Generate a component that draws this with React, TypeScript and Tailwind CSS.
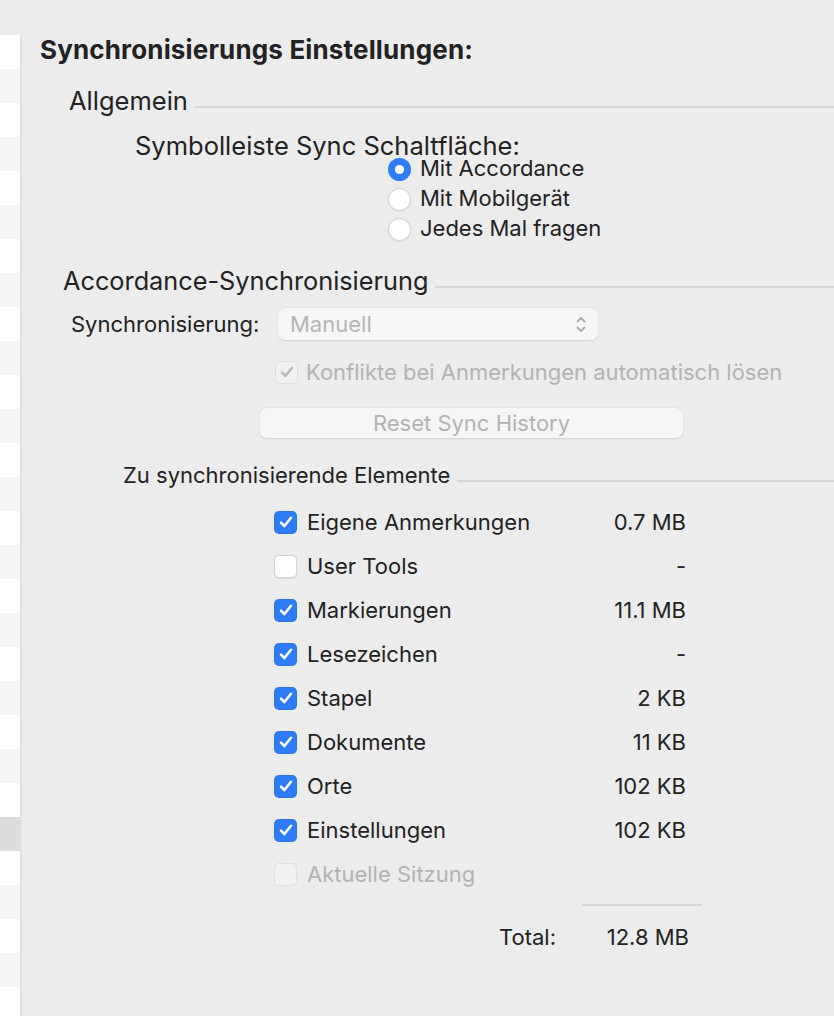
import React from "react";

const FONT = { fontFamily: 'Inter, "Noto Sans", "Liberation Sans", sans-serif' };

function Check({ checked, disabled }: { checked: boolean; disabled?: boolean }) {
  if (disabled) {
    return (
      <div className="w-[23px] h-[23px] rounded-[5px] bg-[#f1f1f1] border border-[#dedede] flex items-center justify-center shrink-0">
        {checked && (
          <svg width="16" height="16" viewBox="0 0 16 16">
            <path d="M3 8.6 L6.4 12 L13 3.8" fill="none" stroke="#b7b7b7" strokeWidth="2.4" strokeLinecap="round" strokeLinejoin="round" />
          </svg>
        )}
      </div>
    );
  }
  if (checked) {
    return (
      <div className="w-[23px] h-[23px] rounded-[5px] bg-[#2f7df6] flex items-center justify-center shrink-0 shadow-[inset_0_0_0_1px_rgba(0,0,0,0.06)]">
        <svg width="16" height="16" viewBox="0 0 16 16">
          <path d="M3 8.6 L6.4 12 L13 3.8" fill="none" stroke="#ffffff" strokeWidth="2.6" strokeLinecap="round" strokeLinejoin="round" />
        </svg>
      </div>
    );
  }
  return (
    <div className="w-[23px] h-[23px] rounded-[5px] bg-white border border-[#d2d2d2] shrink-0 shadow-[0_0.5px_1px_rgba(0,0,0,0.08)]" />
  );
}

function Radio({ selected }: { selected: boolean }) {
  if (selected) {
    return (
      <div className="w-[23px] h-[23px] rounded-full bg-[#2f7df6] flex items-center justify-center shrink-0">
        <div className="w-[9px] h-[9px] rounded-full bg-white" />
      </div>
    );
  }
  return <div className="w-[23px] h-[23px] rounded-full bg-white border border-[#d0d0d0] shrink-0 shadow-[0_0.5px_1px_rgba(0,0,0,0.08)]" />;
}

function SectionHeader({ label, pl, size }: { label: string; pl: string; size: string }) {
  return (
    <div className={`flex items-center h-[30px] ${pl}`}>
      <span className={`${size} text-[#222] whitespace-nowrap leading-none`}>{label}</span>
      <div className="flex-1 h-[2px] bg-[#d6d6d6] ml-[7px] mt-[12px]" />
    </div>
  );
}

const items: { label: string; value: string; checked: boolean; disabled?: boolean }[] = [
  { label: "Eigene Anmerkungen", value: "0.7 MB", checked: true },
  { label: "User Tools", value: "-", checked: false },
  { label: "Markierungen", value: "11.1 MB", checked: true },
  { label: "Lesezeichen", value: "-", checked: true },
  { label: "Stapel", value: "2 KB", checked: true },
  { label: "Dokumente", value: "11 KB", checked: true },
  { label: "Orte", value: "102 KB", checked: true },
  { label: "Einstellungen", value: "102 KB", checked: true },
  { label: "Aktuelle Sitzung", value: "", checked: false, disabled: true },
];

export default function App() {
  const rows = Array.from({ length: 29 }, (_, i) => i);
  return (
    <div className="flex w-[834px] h-[1016px] bg-[#ececec] overflow-hidden" style={FONT}>
      <div className="w-[22px] shrink-0 flex flex-col pt-[35px]">
        <div className="flex flex-col border-r-[2px] border-[#e2e2e2] flex-1">
          {rows.map((i) => (
            <div
              key={i}
              className={`h-[34px] shrink-0 ${i === 23 ? "bg-[#dcdcdc]" : i % 2 === 1 ? "bg-[#f4f5f5]" : "bg-white"}`}
            />
          ))}
        </div>
      </div>
      <div className="flex-1 flex flex-col pt-[35px] text-[#222]">
        <div className="h-[30px] flex items-center pl-[18px]">
          <span className="text-[26px] font-bold leading-none text-[#222] whitespace-nowrap tracking-[0.15px]">Synchronisierungs Einstellungen:</span>
        </div>
        <div className="mt-[21px]">
          <SectionHeader label="Allgemein" pl="pl-[47px]" size="text-[25.5px]" />
        </div>
        <div className="mt-[15px] h-[30px] flex items-center pl-[113px]">
          <span className="text-[25.5px] leading-[0.88] whitespace-nowrap">Symbolleiste Sync Schaltfläche:</span>
        </div>
        <div className="flex flex-col pl-[366px] -mt-[7px]">
          {["Mit Accordance", "Mit Mobilgerät", "Jedes Mal fragen"].map((l, i) => (
            <div key={l} className="h-[30px] flex items-center gap-[9px]">
              <Radio selected={i === 0} />
              <span className="text-[22px] leading-[0.88]">{l}</span>
            </div>
          ))}
        </div>
        <div className="mt-[22px]">
          <SectionHeader label="Accordance-Synchronisierung" pl="pl-[41px]" size="text-[25.3px]" />
        </div>
        <div className="mt-[12px] h-[32px] flex items-center pl-[49px]">
          <span className="w-[207px] text-[22px] leading-none">Synchronisierung:</span>
          <div className="w-[320px] h-[32px] rounded-[7px] bg-[#f6f6f6] shadow-[0_0.5px_2px_rgba(0,0,0,0.12)] flex items-center pl-[12px] pr-[12px]">
            <span className="flex-1 text-[22px] leading-none text-[#b5b5b5]">Manuell</span>
            <svg width="10" height="17" viewBox="0 0 10 17">
              <path d="M1.5 5.5 L5 2 L8.5 5.5 M1.5 11.5 L5 15 L8.5 11.5" fill="none" stroke="#aaaaaa" strokeWidth="1.8" strokeLinecap="round" strokeLinejoin="round" />
            </svg>
          </div>
        </div>
        <div className="mt-[17px] h-[30px] flex items-center pl-[253px] gap-[8px]">
          <Check checked disabled />
          <span className="text-[22px] leading-none text-[#b3b3b3] whitespace-nowrap">Konflikte bei Anmerkungen automatisch lösen</span>
        </div>
        <div className="mt-[21px] pl-[238px]">
          <div className="w-[423px] h-[30px] rounded-[7px] bg-[#f6f6f6] shadow-[0_0.5px_2px_rgba(0,0,0,0.12)] flex items-center justify-center">
            <span className="text-[22px] leading-none text-[#b3b3b3]">Reset Sync History</span>
          </div>
        </div>
        <div className="mt-[22px]">
          <SectionHeader label="Zu synchronisierende Elemente" pl="pl-[101px]" size="text-[22px]" />
        </div>
        <div className="mt-[10px] flex flex-col pl-[252px]">
          {items.map((it) => (
            <div key={it.label} className="h-[44px] w-[412px] flex items-center">
              <Check checked={it.checked} disabled={it.disabled} />
              <span className={`ml-[10px] flex-1 text-[22px] leading-none ${it.disabled ? "text-[#b3b3b3]" : "text-[#222]"}`}>{it.label}</span>
              <span className="text-[22px] leading-none text-[#222]">{it.value}</span>
            </div>
          ))}
        </div>
        <div className="mt-[8px] pl-[560px]">
          <div className="w-[120px] h-[2px] bg-[#d6d6d6]" />
        </div>
        <div className="mt-[16px] h-[30px] pl-[477px]">
          <div className="w-[190px] h-[30px] flex items-center justify-between">
            <span className="text-[22px] leading-none">Total:</span>
            <span className="text-[22px] leading-none">12.8 MB</span>
          </div>
        </div>
      </div>
    </div>
  );
}
